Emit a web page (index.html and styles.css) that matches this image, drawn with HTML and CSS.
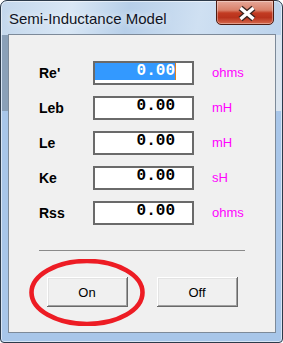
FILE: index.html
```html
<!DOCTYPE html>
<html lang="en">
<head>
    <meta charset="UTF-8">
    <title>Semi-Inductance Model</title>
    <link rel="stylesheet" href="styles.css">
</head>
<body>
<div class="window">
    <div class="titlebar">
        <span class="title">Semi-Inductance Model</span>
        <div class="close">
            <svg width="58" height="24" viewBox="0 0 58 24">
                <path d="M24.5 7 L37.5 18 M37.5 7 L24.5 18" stroke="#3a2420" stroke-width="6" fill="none"/>
                <path d="M24.5 7 L37.5 18 M37.5 7 L24.5 18" stroke="#ffffff" stroke-width="3.4" fill="none"/>
            </svg>
        </div>
    </div>
    <div class="client">
        <div class="fields">
            <div class="row">
                <span class="label">Re'</span>
                <div class="box"><span class="val sel">0.00</span></div>
                <span class="unit">ohms</span>
            </div>
            <div class="row">
                <span class="label">Leb</span>
                <div class="box"><span class="val">0.00</span></div>
                <span class="unit">mH</span>
            </div>
            <div class="row">
                <span class="label">Le</span>
                <div class="box"><span class="val">0.00</span></div>
                <span class="unit">mH</span>
            </div>
            <div class="row">
                <span class="label">Ke</span>
                <div class="box"><span class="val">0.00</span></div>
                <span class="unit">sH</span>
            </div>
            <div class="row">
                <span class="label">Rss</span>
                <div class="box"><span class="val">0.00</span></div>
                <span class="unit">ohms</span>
            </div>
        </div>
        <div class="sep"></div>
        <div class="buttons">
            <button class="btn">On</button>
            <button class="btn">Off</button>
        </div>
        <!-- hand drawn red mark round the On button -->
        <svg class="mark" width="116" height="67" viewBox="0 0 116 67">
            <ellipse cx="58" cy="33.5" rx="55.5" ry="31.5" fill="none" stroke="#ed1c24" stroke-width="4.6"/>
        </svg>
    </div>
</div>
</body>
</html>
```

FILE: styles.css
```css
*{
    margin: 0;
    padding: 0;
    box-sizing: border-box;
}

body{
    background: #ffffff;
}

.window{
    width: 283px;
    height: 343px;
    border: 1px solid #2c3a4a;
    border-radius: 7px 7px 4px 4px;
    box-shadow: inset 0 0 0 1px rgba(255,255,255,0.55);
    background:
        linear-gradient(#8aa0b8, #8aa0b8) left 1px top 34px / 7px 76px no-repeat,
        linear-gradient(#dbe5ef, #dbe5ef) right 1px top 34px / 6px 76px no-repeat,
        linear-gradient(100deg, #c3d7ec 0%, #d9e7f5 25%, #b7cfe9 45%, #cfe0f2 70%, #bcd3ec 100%) top / 100% 34px no-repeat,
        #a8c6e9;
    display: flex;
    flex-direction: column;
}

.titlebar{
    height: 33px;
    display: flex;
    justify-content: space-between;
    align-items: flex-start;
    padding-left: 8px;
}

.title{
    margin-top: 9px;
    font-family: "Liberation Sans", Arial, sans-serif;
    font-size: 15px;
    line-height: 18px;
    color: #101424;
    text-shadow: 0 0 6px rgba(255,255,255,0.9);
}

.close{
    width: 58px;
    height: 25px;
    margin-top: -1px;
    margin-right: 8px;
    border: 1px solid #4d1c12;
    border-radius: 0 0 5px 5px;
    background: linear-gradient(#e6a899 0%, #d98069 40%, #c23b22 52%, #b8321c 72%, #d66a4e 100%);
    box-shadow: inset 0 0 0 1px rgba(255,255,255,0.35);
}

.close svg{
    display: block;
    margin: 0 0 0 -1px;
}

.client{
    position: relative;
    margin: 0 6px 0 7px;
    border: 1px solid #7d8a99;
    background: #f0f0f0;
    padding: 26px 30px 25px;
}

.fields{
    display: flex;
    flex-direction: column;
    gap: 11px;
}

.row{
    display: grid;
    grid-template-columns: 54px 101px auto;
    height: 24px;
    align-items: center;
}

.label{
    font-family: "Liberation Sans", Arial, sans-serif;
    font-weight: bold;
    font-size: 14px;
    line-height: 24px;
    color: #000000;
}

.box{
    height: 24px;
    border: 2px solid #6a6a6a;
    background: #ffffff;
    display: flex;
    justify-content: flex-end;
    align-items: flex-start;
    padding-right: 16px;
}

.val{
    font-family: "Liberation Mono", "DejaVu Sans Mono", monospace;
    font-weight: bold;
    font-size: 16px;
    line-height: 17px;
    height: 17px;
    color: #000000;
    text-align: right;
    border-right: 1px solid transparent;
}

.val.sel{
    flex: 1;
    background: #3399ff;
    color: #ffffff;
    border-right-color: #e0801c;
}

.unit{
    margin-left: 18px;
    font-family: "Liberation Sans", Arial, sans-serif;
    font-size: 13px;
    line-height: 24px;
    color: #ff00ff;
}

.sep{
    height: 1px;
    margin-top: 25px;
    background: #8a8a8a;
}

.buttons{
    display: flex;
    justify-content: center;
    gap: 29px;
    margin-top: 26px;
}

.btn{
    width: 81px;
    height: 30px;
    border: none;
    background: #f0f0f0;
    box-shadow: inset -1px -1px #696969, inset 1px 1px #ffffff, inset -2px -2px #a0a0a0, inset 2px 2px #e3e3e3;
    font-family: "Liberation Sans", Arial, sans-serif;
    font-size: 13px;
    color: #000000;
}

.mark{
    position: absolute;
    left: 20px;
    top: 224px;
}
```
